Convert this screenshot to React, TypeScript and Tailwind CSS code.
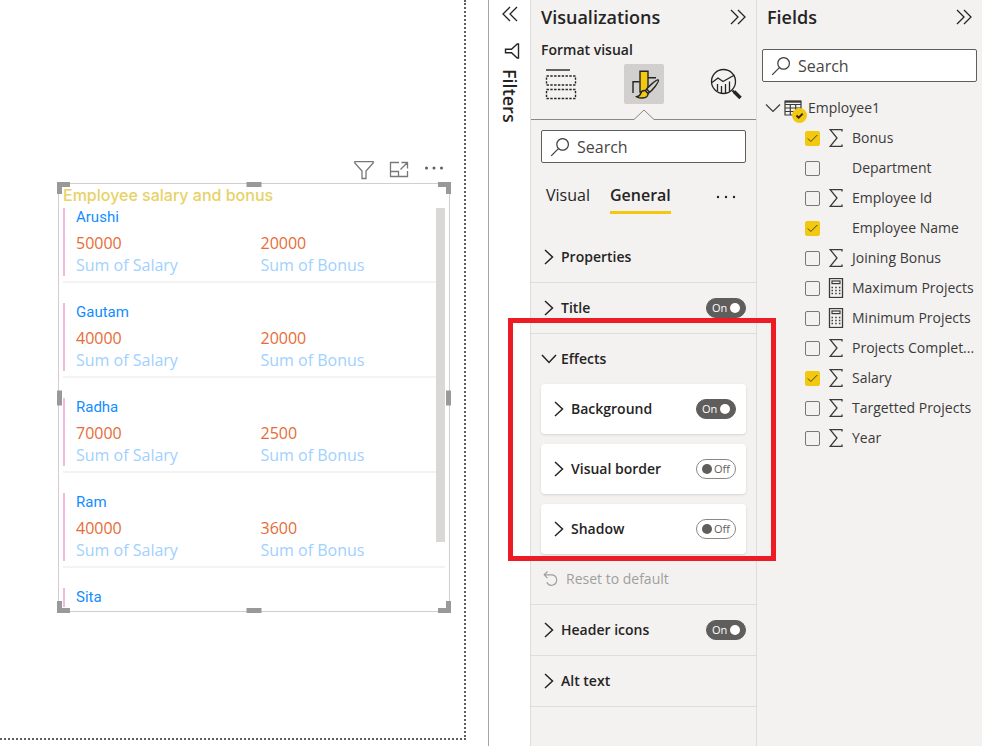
import React, {useState} from 'react'
import clsx from 'clsx'

type Employee = {
    name: string,
    salary: string,
    bonus: string
}

type Field = {
    name: string,
    icon?: 'sum' | 'calc',
    checked?: boolean
}

const employees: Employee[] = [
    {name: 'Arushi', salary: '50000', bonus: '20000'},
    {name: 'Gautam', salary: '40000', bonus: '20000'},
    {name: 'Radha', salary: '70000', bonus: '2500'},
    {name: 'Ram', salary: '40000', bonus: '3600'},
];

const fields: Field[] = [
    {name: 'Bonus', icon: 'sum', checked: true},
    {name: 'Department'},
    {name: 'Employee Id', icon: 'sum'},
    {name: 'Employee Name', checked: true},
    {name: 'Joining Bonus', icon: 'sum'},
    {name: 'Maximum Projects', icon: 'calc'},
    {name: 'Minimum Projects', icon: 'calc'},
    {name: 'Projects Complet...', icon: 'sum'},
    {name: 'Salary', icon: 'sum', checked: true},
    {name: 'Targetted Projects', icon: 'sum'},
    {name: 'Year', icon: 'sum'},
];

// Icons

const DoubleChevron = ({left}: { left?: boolean }) => (
    <svg className={clsx('w-4 h-4', left && 'rotate-180')} viewBox="0 0 16 16" fill="none" stroke="#252423"
         strokeWidth="1.3">
        <path d="M1 1l7 7-7 7M8 1l7 7-7 7"/>
    </svg>
);

const Chevron = ({open}: { open?: boolean }) => (
    <svg className={clsx('w-4 h-4 shrink-0', open && 'rotate-90')} viewBox="0 0 16 16" fill="none" stroke="#252423"
         strokeWidth="1.5">
        <path d="M4 1l7.500 7-7.500 7"/>
    </svg>
);

const SearchIcon = () => (
    <svg className="w-5 h-5 shrink-0" viewBox="0 0 20 20" fill="none" stroke="#3b3a39" strokeWidth="1.2">
        <circle cx="12.6" cy="7.4" r="5.8"/>
        <path d="M8.4 11.6L1.2 18.8"/>
    </svg>
);

const FieldIcon = ({icon}: { icon?: 'sum' | 'calc' }) => {
    if (icon === 'sum') {
        return (
            <svg className="w-4 h-5" viewBox="0 0 16 20" fill="none" stroke="#3b3a39" strokeWidth="1.3">
                <path d="M14 3.5V1.6H2.2L9 10l-6.8 8.4H14v-1.9"/>
            </svg>
        );
    }
    if (icon === 'calc') {
        return (
            <svg className="w-4 h-5" viewBox="0 0 16 20" fill="none" stroke="#3b3a39">
                <rect x="1.5" y=".5" width="13" height="19" strokeWidth="1.3"/>
                <rect x="4" y="3" width="8" height="2.6" strokeWidth="1.2"/>
                <path d="M3.5 9.5h9M3.5 12.5h9M3.5 15.5h9" strokeWidth="1.5" strokeDasharray="1.5 2.2"/>
            </svg>
        );
    }
    return <span className="w-4"></span>;
};

const BuildIcon = () => (
    <svg className="w-8 h-8" viewBox="0 0 32 32" fill="none" stroke="#252423">
        <path d="M1 2h24" strokeWidth="1.4"/>
        <rect x="1.5" y="8" width="29" height="9" strokeWidth="1.4" strokeDasharray="2.4 1.400"/>
        <rect x="1.5" y="21.500" width="29" height="9" strokeWidth="1.4" strokeDasharray="2.4 1.400"/>
    </svg>
);

const FormatIcon = () => (
    <svg className="w-8 h-8" viewBox="0 0 32 32" fill="none" stroke="#252423" strokeWidth="1.4">
        <path d="M5 25V13.700h6.500M20 9.700h8"/>
        <path d="M12 24V3.300h8V24z" fill="#f2c811"/>
        <path d="M30.300 12c.8.900-1.500 4.200-3.600 7-1.900 2.500-4.300 5-6.700 6.600l-2.800-2.800c1.600-2.300 4.300-5 6.900-7.200 2.500-2.200 5.400-4.500 6.200-3.600z"
              fill="#d2d0ce"/>
        <path d="M17.200 22.600c-2.300-.2-3.900.9-4.400 2.600-.5 1.800-1.600 3-4 3.600 3.200 1.700 8 1.800 10.200-.4 1-1.100 1.200-2 1-2.900z"
              fill="#f2c811"/>
        <path d="M18.800 21.200l2.700 2.900" />
    </svg>
);

const AnalyticsIcon = () => (
    <svg className="w-8 h-8" viewBox="0 0 32 32" fill="none" stroke="#252423" strokeWidth="1.3">
        <circle cx="13.500" cy="13.500" r="12"/>
        <path d="M2 14.500l6-4.500 5 3.500 11.500-6.500"/>
        <path d="M7.500 16v7M11.500 18v7M15.500 16v9M19.500 13.500v10"/>
        <path d="M22.500 22.500l2 2" strokeWidth="2"/>
        <path d="M24 23.500l6.500 6.500" strokeWidth="3.500"/>
    </svg>
);

const TableIcon = () => (
    <svg className="w-[18px] h-4" viewBox="0 0 18 16" fill="none" stroke="#3b3a39" strokeWidth="1.2">
        <path d="M1 1h16v14H1zM1 4.500h16M1 8h16M1 11.500h16M6.300 4v11M11.700 4v11"/>
        <path d="M1 1.700h16" strokeWidth="2"/>
    </svg>
);

// Shared controls

const Toggle = ({label, initial}: { label: string, initial: boolean }) => {
    const [on, setOn] = useState(initial);

    return (
        <label
            className={clsx(
                'relative flex items-center justify-between w-10 h-5 shrink-0 rounded-full border px-[5px] text-[11px] leading-4',
                on ? 'bg-[#605e5c] border-[#605e5c] text-white' : 'flex-row-reverse bg-white border-[#8a8886] text-[#605e5c]'
            )}>
            <input type="checkbox" role="switch" aria-label={label} checked={on}
                   onChange={() => setOn(!on)} className="sr-only"/>
            <span>{on ? 'On' : 'Off'}</span>
            <span className={clsx('w-[10px] h-[10px] rounded-full', on ? 'bg-white' : 'bg-[#605e5c]')}></span>
        </label>
    );
};

const SearchBox = ({label}: { label: string }) => (
    <label className="flex items-center gap-[7px] h-[33px] bg-white border border-[#605e5c] rounded-[2px] px-2">
        <SearchIcon/>
        <input type="text" aria-label={label} placeholder="Search"
               className="w-full min-w-0 outline-none text-base text-[#252423] placeholder:text-[#484644]"/>
    </label>
);

const PaneHeading = ({title}: { title: string }) => (
    <div className="flex items-center justify-between h-[34px] px-[10px]">
        <h2 className="text-lg font-semibold">{title}</h2>
        <button type="button" aria-label={`Collapse ${title}`}><DoubleChevron/></button>
    </div>
);

const SectionRow = ({title, toggle}: { title: string, toggle?: boolean }) => (
    <div className="flex items-center justify-between h-[51px] px-[10px] border-b border-[#dedddc]">
        <button type="button" className="flex items-center gap-1 text-sm font-semibold">
            <Chevron/>{title}
        </button>
        {toggle && <Toggle label={title} initial={true}/>}
    </div>
);

const EffectCard = ({title, on}: { title: string, on: boolean }) => (
    <div className="flex items-center justify-between h-[50px] px-[10px] bg-white rounded shadow">
        <button type="button" className="flex items-center gap-1 text-sm font-semibold">
            <Chevron/>{title}
        </button>
        <Toggle label={title} initial={on}/>
    </div>
);

// Report canvas

const Measure = ({value, label}: { value: string, label: string }) => (
    <div className="text-base">
        <p className="leading-[22px] text-[#e66c37]">{value}</p>
        <p className="leading-[22px] text-[#a0d1ff]">{label}</p>
    </div>
);

const ResizeHandles = () => (
    <div className="text-[#999]">
        <span className="absolute -left-[2px] -top-[2px] w-[13px] h-3 border-l-[5px] border-t-[5px]"></span>
        <span className="absolute -right-[2px] -top-[2px] w-[13px] h-3 border-r-[5px] border-t-[5px]"></span>
        <span className="absolute -left-[2px] -bottom-[2px] w-[13px] h-3 border-l-[5px] border-b-[5px]"></span>
        <span className="absolute -right-[2px] -bottom-[2px] w-[13px] h-3 border-r-[5px] border-b-[5px]"></span>
        <span className="absolute left-1/2 -translate-x-1/2 -top-[2px] w-[15px] h-[5px] bg-current"></span>
        <span className="absolute left-1/2 -translate-x-1/2 -bottom-[2px] w-[15px] h-[5px] bg-current"></span>
        <span className="absolute top-1/2 -translate-y-1/2 -left-[2px] w-[5px] h-[15px] bg-current"></span>
        <span className="absolute top-1/2 -translate-y-1/2 -right-[2px] w-[5px] h-[15px] bg-current"></span>
    </div>
);

const EmployeeVisual = () => (
    <div>
        <div className="flex justify-end items-center gap-[15px] h-[25px] pr-[6px] pb-[2px]">
            <button type="button" aria-label="Filter">
                <svg className="w-5 h-5" viewBox="0 0 20 20" fill="none" stroke="#7a7877" strokeWidth="1.3">
                    <path d="M.8 1.700h18.400v1.300L12 11v7.500H8V11L.8 3z"/>
                </svg>
            </button>
            <button type="button" aria-label="Focus mode">
                <svg className="w-5 h-5" viewBox="0 0 20 20" fill="none" stroke="#7a7877" strokeWidth="1.300">
                    <path d="M10 2.500H1.500v14h17V11M1.500 11.500h8v5M12.500 2.500h6v6M18.500 2.500l-7 7"/>
                </svg>
            </button>
            <button type="button" aria-label="More options">
                <svg className="w-5 h-5" viewBox="0 0 20 20" fill="#605e5c">
                    <circle cx="2.500" cy="8" r="1.500"/>
                    <circle cx="10" cy="8" r="1.500"/>
                    <circle cx="17.500" cy="8" r="1.500"/>
                </svg>
            </button>
        </div>
        <div className="relative h-[429px] border border-[#d0cfce] pl-1 pr-1">
            <h3 className="h-6 font-[Inter] text-base leading-[22px] font-medium text-[#e8d166]">
                Employee salary and bonus
            </h3>
            <div className="relative h-[399px] overflow-hidden">
                {employees.map((employee) => (
                    <div key={employee.name} className="h-[95px]">
                        <div className="h-[68px] border-l-2 border-[#f2b9e1] pl-[11px]">
                            <h4 className="mb-[6px] font-[Roboto] text-[15px] leading-[18px] text-[#118dff]">{employee.name}</h4>
                            <div className="grid grid-cols-2">
                                <Measure value={employee.salary} label="Sum of Salary"/>
                                <Measure value={employee.bonus} label="Sum of Bonus"/>
                            </div>
                        </div>
                        <div className="mt-[5px] h-[2px] bg-[#f3f3f3]"></div>
                    </div>
                ))}
                <div className="h-[68px] border-l-2 border-[#f2b9e1] pl-[11px]">
                    <h4 className="font-[Roboto] text-[15px] leading-[18px] text-[#118dff]">Sita</h4>
                </div>
                {/* Scrollbar thumb */}
                <div className="absolute right-0 top-0 w-[9px] h-[334px] bg-[#d9d8d7]"></div>
            </div>
            <ResizeHandles/>
        </div>
    </div>
);

// Panes

const FiltersPane = () => (
    <aside className="flex flex-col items-center w-[42px] shrink-0 border-l border-[#a6a5a4] pt-[6px] bg-white">
        <button type="button" aria-label="Expand filters" className="h-4"><DoubleChevron left/></button>
        <svg className="mt-[21px] mb-[10px] ml-1 w-4 h-4 rotate-90" viewBox="0 0 16 16" fill="none" stroke="#252423"
             strokeWidth="1.400">
            <path d="M1 1.500h14v1.300L9.800 8.500v6H6.200v-6L1 2.800z"/>
        </svg>
        <h2 className="[writing-mode:vertical-rl] text-lg font-semibold">Filters</h2>
    </aside>
);

const VisualizationsPane = () => (
    <aside className="w-[226px] shrink-0 border-l border-[#dedddc]">
        <PaneHeading title="Visualizations"/>
        <h3 className="h-[30px] px-[10px] text-sm leading-[32px] font-semibold">Format visual</h3>
        <div className="flex justify-between px-[10px]">
            <button type="button" aria-label="Build visual"
                    className="flex items-center justify-center w-10 h-10"><BuildIcon/></button>
            <button type="button" aria-label="Format visual"
                    className="flex items-center justify-center w-10 h-10 rounded-[2px] bg-[#d2d0ce]">
                <FormatIcon/>
            </button>
            <button type="button" aria-label="Analytics"
                    className="flex items-center justify-center w-10 h-10"><AnalyticsIcon/></button>
        </div>
        <div className="flex items-end h-4">
            <span className="flex-1 h-px bg-[#8a8886]"></span>
            <svg className="w-5 h-[11px]" viewBox="0 0 20 11" fill="none" stroke="#8a8886">
                <path d="M0 10.500L10 1l10 9.500"/>
            </svg>
            <span className="flex-1 h-px bg-[#8a8886]"></span>
        </div>
        <div className="px-[10px] pt-[10px]"><SearchBox label="Search format options"/></div>
        <div className="flex items-center h-[67px] mb-[2px] pl-[15px] pr-[20px] text-base">
            <button type="button" className="h-[35px] pb-[3px]">Visual</button>
            <button type="button" className="ml-5 h-[35px] border-b-[3px] border-[#f2c811] font-semibold">General</button>
            <button type="button" aria-label="More tabs" className="ml-auto">
                <svg className="w-5 h-1" viewBox="0 0 20 4" fill="#252423">
                    <circle cx="2" cy="2" r="1.200"/>
                    <circle cx="10" cy="2" r="1.200"/>
                    <circle cx="18" cy="2" r="1.200"/>
                </svg>
            </button>
        </div>
        <SectionRow title="Properties"/>
        <SectionRow title="Title" toggle/>
        <section className="relative px-[10px] border-b border-[#dedddc]">
            <button type="button" className="flex items-center gap-1 h-[50px] text-sm font-semibold">
                <Chevron open/>Effects
            </button>
            <div className="flex flex-col gap-[10px]">
                <EffectCard title="Background" on={true}/>
                <EffectCard title="Visual border" on={false}/>
                <EffectCard title="Shadow" on={false}/>
            </div>
            <button type="button" className="flex items-center gap-[5px] h-[50px] text-sm text-[#a19f9d]">
                <svg className="w-5 h-5" viewBox="0 0 20 20" fill="none" stroke="#a19f9d" strokeWidth="1.200">
                    <path d="M6.500 2.500L3.200 5.800l3.300 3.300M3.200 5.800h7.300a5.200 5.200 0 1 1-4.700 7.500"/>
                </svg>
                Reset to default
            </button>
            {/* Highlight round the effects group */}
            <div className="absolute -left-[23px] -right-[20px] -top-4 bottom-[43px] border-[5px] border-[#ed1c24] pointer-events-none"></div>
        </section>
        <SectionRow title="Header icons" toggle/>
        <SectionRow title="Alt text"/>
    </aside>
);

const FieldRow = ({field}: { field: Field }) => {
    const [checked, setChecked] = useState(!!field.checked);

    return (
        <label className="flex items-center h-[30px] pl-12">
            <span className="relative w-[15px] h-[15px] shrink-0">
                <input type="checkbox" checked={checked} onChange={() => setChecked(!checked)}
                       className="block appearance-none w-full h-full rounded-[2px] border border-[#797775] checked:border-[#f2c811] checked:bg-[#f2c811]"/>
                {checked && (
                    <svg className="absolute inset-0 pointer-events-none" viewBox="0 0 15 15" fill="none"
                         stroke="#4a4218">
                        <path d="M2.800 7.500l3 3L12.300 4"/>
                    </svg>
                )}
            </span>
            <span className="flex mx-2 shrink-0"><FieldIcon icon={field.icon}/></span>
            <span className="whitespace-nowrap text-sm">{field.name}</span>
        </label>
    );
};

const FieldsPane = () => (
    <aside className="w-[226px] shrink-0 border-l border-[#dedddc] text-[#252423]">
        <PaneHeading title="Fields"/>
        <div className="pt-[15px] pb-[11px] px-[5px]"><SearchBox label="Search fields"/></div>
        <button type="button" className="flex items-center h-[30px] pl-2 text-sm text-[#3b3a39]">
            <svg className="w-4 h-4" viewBox="0 0 16 16" fill="none" stroke="#3b3a39" strokeWidth="1.200">
                <path d="M1 4.500l7 7 7-7"/>
            </svg>
            <span className="relative ml-[3px] mr-[6px]">
                <TableIcon/>
                <svg className="absolute left-2 top-2 w-[15px] h-[15px]" viewBox="0 0 15 15">
                    <circle cx="7.500" cy="7.500" r="7.500" fill="#f2c811"/>
                    <path d="M4.500 7.500l2.200 2.200 4-4" fill="none" stroke="#252423" strokeWidth="1.800"/>
                </svg>
            </span>
            Employee1
        </button>
        <div className="text-[#3b3a39]">
            {fields.map((field) => <FieldRow key={field.name} field={field}/>)}
        </div>
    </aside>
);

const App = () => {
    return (
        <div className="flex min-h-screen bg-[#f3f2f1] font-['Open_Sans',sans-serif] text-[#252423]">
            <main className="flex flex-1 min-w-0 bg-white pr-[22px] pb-[6px]">
                <div className="flex-1 border-r-2 border-b-2 border-dotted border-[#605e5c] pt-[158px] pl-[58px] pr-[14px]">
                    <EmployeeVisual/>
                </div>
            </main>
            <FiltersPane/>
            <VisualizationsPane/>
            <FieldsPane/>
        </div>
    );
};

export default App;
